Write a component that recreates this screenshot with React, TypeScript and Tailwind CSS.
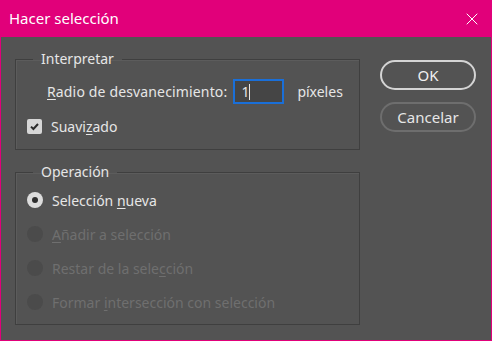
import { X } from 'lucide-react';

const font = { fontFamily: '"Noto Sans", "Open Sans", sans-serif' };

function Radio({ label, checked, disabled }: { label: React.ReactNode; checked?: boolean; disabled?: boolean }) {
  return (
    <div className="flex items-center h-[34px] pl-[11px]">
      <span
        className={
          'w-[16px] h-[16px] rounded-full flex items-center justify-center ' +
          (disabled ? 'bg-[#4b4b4b]' : 'bg-[#dcdcdc]')
        }
      >
        {checked && <span className="w-[6px] h-[6px] rounded-full bg-[#2e2e2e]" />}
      </span>
      <span className={'ml-[9px] text-[14px] ' + (disabled ? 'text-[#6f6f6f]' : 'text-[#e6e6e6]')}>{label}</span>
    </div>
  );
}

export default function App() {
  return (
    <div className="w-[492px] h-[341px] bg-[#535353] border-x border-b border-[#e1007a] flex flex-col" style={font}>
      {/* title bar */}
      <div className="h-[37px] bg-[#e1007a] flex items-center justify-between pl-[9px] pr-[10px] -mx-px">
        <span className="text-white text-[15px]">Hacer selección</span>
        <X className="w-[20px] h-[20px] text-white" strokeWidth={1.2} />
      </div>

      <div className="flex">
        <div className="ml-[14px] w-[345px]">
          {/* Interpretar */}
          <fieldset className="mt-[12px] border border-[#3f3f3f] shadow-[inset_1px_1px_0_#5c5c5c] px-0 pt-0 pb-[15px] m-0">
            <legend className="ml-[17px] px-[8px] h-[20px] leading-[20px] text-[14px] text-[#e6e6e6]">Interpretar</legend>
            <div className="flex items-center h-[25px] mt-[10px] pl-[31px] text-[14px] text-[#e6e6e6]">
              <span className="tracking-[0.15px]">
                <span className="underline underline-offset-2">R</span>adio de desvanecimiento:
              </span>
              <div className="ml-[6px] w-[51px] h-[25px] border-2 border-[#1a6fd8] bg-[#454545] flex items-center pl-[6px]">
                <span>1</span>
                <span className="w-px h-[16px] bg-[#e6e6e6]" />
              </div>
              <span className="ml-[13px]">píxeles</span>
            </div>
            <div className="flex items-center h-[15px] mt-[15px] pl-[11px]">
              <span className="w-[15px] h-[15px] rounded-[2px] bg-[#d6d6d6] flex items-center justify-center">
                <svg width="11" height="11" viewBox="0 0 11 11">
                  <path d="M2 5.6 L4.4 8 L9 3" fill="none" stroke="#2b2b2b" strokeWidth="2" />
                </svg>
              </span>
              <span className="ml-[9px] text-[14px] text-[#e6e6e6]">
                Suavi<span className="underline underline-offset-2">z</span>ado
              </span>
            </div>
          </fieldset>

          {/* Operación */}
          <fieldset className="mt-[12px] border border-[#3f3f3f] shadow-[inset_1px_1px_0_#5c5c5c] px-0 pt-[1px] pb-[5px] m-0">
            <legend className="ml-[17px] px-[8px] h-[20px] leading-[20px] text-[14px] text-[#e6e6e6]">Operación</legend>
            <Radio checked label={<>Selección <span className="underline underline-offset-2">n</span>ueva</>} />
            <Radio disabled label={<><span className="underline underline-offset-2">A</span>ñadir a selección</>} />
            <Radio disabled label={<>Restar de la sele<span className="underline underline-offset-2">c</span>ción</>} />
            <Radio disabled label={<>Formar <span className="underline underline-offset-2">i</span>ntersección con selección</>} />
          </fieldset>
        </div>

        <div className="ml-[20px] mt-[23px] flex flex-col gap-[12px]">
          <button className="w-[96px] h-[30px] rounded-full border-2 border-[#d4d4d4] text-[#f0f0f0] text-[15px]">OK</button>
          <button className="w-[96px] h-[30px] rounded-full border-2 border-[#6e6e6e] text-[#e6e6e6] text-[15px]">Cancelar</button>
        </div>
      </div>
    </div>
  );
}
